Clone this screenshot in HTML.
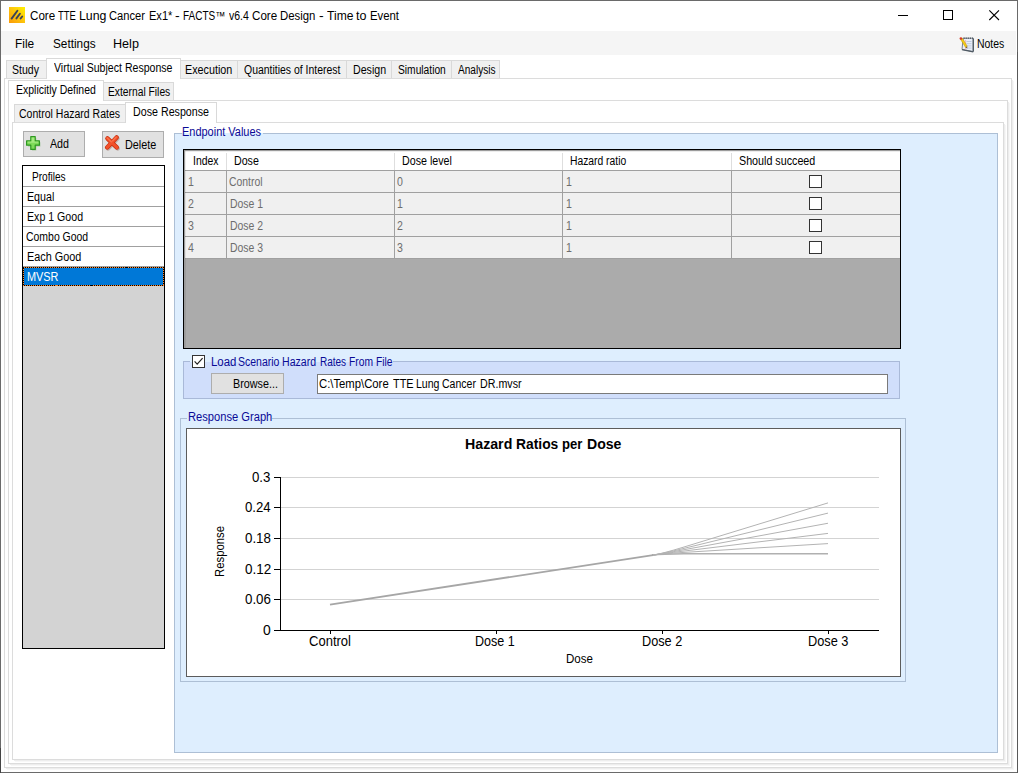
<!DOCTYPE html>
<html lang="en"><head><meta charset="utf-8"><title>Core TTE Lung Cancer Ex1* - FACTS v6.4 Core Design - Time to Event</title>
<style>
html,body{margin:0;padding:0}
body{width:1018px;height:773px;position:relative;overflow:hidden;background:#fff;font-family:"Liberation Sans",sans-serif;font-size:11px;color:#000}
div,span,svg{position:absolute;box-sizing:border-box}
.t{white-space:pre;line-height:20px;height:20px}
.frame{left:0;top:0;width:1018px;height:773px;border:1px solid #6a6a6a}
.menubar{left:1px;top:31px;width:1015px;height:24px;background:#f5f5f5}
/* tabs */
.tab{background:#f0f0f0;border:1px solid #d9d9d9;border-bottom:none}
.tab.sel{background:#fff}
.page{border:1px solid #dcdcdc;background:#fff}
.sh1{background:#ededed}.sh2{background:#f7f7f7}
.btn{background:#e1e1e1;border:1px solid #adadad}
.list{left:22px;top:165px;width:143px;height:484px;border:1px solid #000;background:#d3d3d3}
.list .row{left:0;width:141px;height:20px;background:#fff;border-bottom:1px solid #a0a0a0}
.panel{background:#deeefe}
.ln{background:#adbfd5}
.grid{left:183px;top:149px;width:718px;height:200px;border:1px solid #000;background:#ababab}
.grid .hd{left:0;top:0;width:716px;height:21px;background:#fff;border-bottom:1px solid #a0a0a0}
.grid .r{left:0;width:716px;height:22px;background:#f0f0f0;border-bottom:1px solid #a0a0a0}
.grid .v{top:21px;width:1px;height:88px;background:#a0a0a0}
.grid .hv{top:3px;width:1px;height:17px;background:#dedede}
.cb{width:13px;height:13px;border:1px solid #333;background:#fff}
.tb{left:317px;top:374px;width:571px;height:20px;border:1px solid #7a7a7a;background:#fff}
.chart{left:186px;top:428px;width:715px;height:249px;border:1px solid #5c5c5c;background:#fff}

</style></head>
<body>
<div class="frame"></div>
<div style="left:0;top:748px;width:1px;height:25px;background:#444"></div>
<div style="left:1017px;top:52px;width:1px;height:721px;background:#585858"></div>
<!-- title bar icon -->
<svg style="left:9px;top:7px" width="16" height="16" viewBox="0 0 16 16">
<defs><linearGradient id="ig" x1="0" y1="1" x2="1" y2="0"><stop offset="0" stop-color="#fb9a08"/><stop offset="0.55" stop-color="#fdc80c"/><stop offset="1" stop-color="#fff200"/></linearGradient></defs>
<rect width="16" height="16" fill="url(#ig)"/>
<g stroke="#3b4259" stroke-width="1.9" stroke-linecap="round"><path d="M2.6 11.6L8.4 3.8"/><path d="M7.4 11.4L10.9 6.7"/><path d="M11.6 11.5L13.2 9.5"/></g>
</svg>
<!-- window controls -->
<svg style="left:890px;top:5px" width="120" height="22" viewBox="0 0 120 22" shape-rendering="crispEdges">
<rect x="8" y="10" width="10" height="1" fill="#000"/>
<rect x="53.5" y="5.5" width="9" height="9" fill="none" stroke="#000" stroke-width="1"/>
<g shape-rendering="auto" stroke="#000" stroke-width="1.1"><path d="M99.3 5.3L109 15M109 5.3L99.3 15"/></g>
</svg>
<div class="menubar"></div>
<!-- notes icon -->
<svg style="left:958px;top:36px" width="18" height="18" viewBox="0 0 18 18">
<path d="M5.2 2.2L15.2 2.2L15.2 15.6L4 13.4Z" fill="#e9eef8" stroke="#6c7680" stroke-width="0.9"/>
<path d="M15.3 2.4L15.3 15.6" stroke="#4f5a64" stroke-width="1.3"/>
<path d="M4 13.6L15.2 15.8" stroke="#4f5a64" stroke-width="1.3"/>
<path d="M5.6 2.2h9.4" stroke="#555e68" stroke-width="1.6" stroke-dasharray="1.1 1"/>
<g stroke="#b9c6dc" stroke-width="0.9"><path d="M8.5 5.5h5"/><path d="M8.5 7.7h5"/><path d="M8.5 9.9h5"/><path d="M8.5 12.1h5"/></g>
<path d="M7.6 4v9.6" stroke="#f0a0a0" stroke-width="0.7"/>
<path d="M2.6 3.4L4.4 2.2L9.2 10.2L7.6 11.4Z" fill="#f6cf12" stroke="#b98d0a" stroke-width="0.5"/>
<path d="M7.6 11.4L9.2 10.2L9.3 12.6Z" fill="#6b5a3a"/>
<circle cx="2.9" cy="2.5" r="1.3" fill="#d23a28"/>
</svg>

<!-- level 1 tab page -->
<div class="page" style="left:4px;top:78px;width:1008px;height:690px"></div>
<div class="sh1" style="left:1012px;top:80px;width:1px;height:689px"></div><div class="sh2" style="left:1013px;top:81px;width:1px;height:689px"></div>
<div class="sh1" style="left:6px;top:768px;width:1007px;height:1px"></div><div class="sh2" style="left:7px;top:769px;width:1007px;height:1px"></div>
<!-- level 1 tabs -->
<div class="tab" style="left:6px;top:60px;width:494px;height:18px"></div>
<div style="left:237px;top:61px;width:1px;height:17px;background:#d9d9d9"></div>
<div style="left:346px;top:61px;width:1px;height:17px;background:#d9d9d9"></div>
<div style="left:391px;top:61px;width:1px;height:17px;background:#d9d9d9"></div>
<div style="left:451px;top:61px;width:1px;height:17px;background:#d9d9d9"></div>
<div class="tab sel" style="left:46px;top:58px;width:135px;height:21px"></div>

<!-- level 2 -->
<div class="page" style="left:8px;top:100px;width:1000px;height:664px"></div>
<div class="sh1" style="left:1008px;top:102px;width:1px;height:663px"></div><div class="sh2" style="left:1009px;top:103px;width:1px;height:663px"></div>
<div class="sh1" style="left:10px;top:764px;width:999px;height:1px"></div><div class="sh2" style="left:11px;top:765px;width:999px;height:1px"></div>
<div class="tab" style="left:103px;top:82px;width:71px;height:18px"></div>
<div class="tab sel" style="left:8px;top:80px;width:96px;height:21px"></div>

<!-- level 3 -->
<div class="page" style="left:12px;top:122px;width:992px;height:638px"></div>
<div class="sh1" style="left:1004px;top:124px;width:1px;height:637px"></div><div class="sh2" style="left:1005px;top:125px;width:1px;height:637px"></div>
<div class="sh1" style="left:14px;top:760px;width:991px;height:1px"></div><div class="sh2" style="left:15px;top:761px;width:991px;height:1px"></div>
<div class="tab" style="left:14px;top:104px;width:112px;height:18px"></div>
<div class="tab sel" style="left:125px;top:102px;width:92px;height:21px"></div>

<!-- buttons -->
<div class="btn" style="left:23px;top:131px;width:62px;height:26px"></div>
<div class="btn" style="left:102px;top:131px;width:62px;height:27px"></div>
<!-- add icon -->
<svg style="left:25px;top:135px" width="17" height="17" viewBox="0 0 17 17">
<path d="M6.3 2.2h4.2v4.1h4.1v4.2h-4.1v4.1H6.3v-4.1H2.2V6.3h4.1z" fill="#3f8f2c" opacity="0.35" transform="translate(0.8,0.9)"/>
<path d="M5.8 1.6h4.4v4.2h4.2v4.4h-4.2v4.2H5.8v-4.2H1.6V5.8h4.2z" fill="#7fdc5a" stroke="#2f9822" stroke-width="1.2" stroke-linejoin="round"/>
<path d="M6.6 2.6h2.8v4h4v1.2h-10.8v-1.2h4z" fill="#b4f090" opacity="0.7"/>
</svg>
<!-- delete icon -->
<svg style="left:104px;top:135px" width="17" height="17" viewBox="0 0 17 17">
<g fill="none" stroke-linecap="round">
<g stroke="#6a2a18" stroke-width="4.2" opacity="0.28" transform="translate(0.9,1)"><path d="M3.4 3.6L12.8 12.6"/><path d="M12.6 2.6L3.2 12.6"/></g>
<g stroke="#c9300f" stroke-width="4.4"><path d="M3.4 3.4L12.8 12.4"/><path d="M12.6 2.4L3.2 12.4"/></g>
<g stroke="#f2512b" stroke-width="3"><path d="M3.4 3.4L12.8 12.4"/><path d="M12.6 2.4L3.2 12.4"/></g>
<g stroke="#ff8259" stroke-width="1.2" opacity="0.8"><path d="M3.2 2.9L7.4 6.9"/><path d="M12.2 2.1L8.6 5.9"/></g>
</g>
</svg>

<!-- profile list -->
<div class="list">
<div class="row" style="top:0;height:21px"></div>
<div class="row" style="top:21px"></div>
<div class="row" style="top:41px"></div>
<div class="row" style="top:61px"></div>
<div class="row" style="top:81px"></div>
<div style="left:0;top:101px;width:141px;height:19px;background:#0078d7"></div>
<svg style="left:0;top:101px" width="141" height="19" shape-rendering="crispEdges"><rect x="0.5" y="0.5" width="140" height="18" fill="none" stroke="#000" stroke-width="1"/><rect x="0.5" y="0.5" width="140" height="18" fill="none" stroke="#ff8728" stroke-width="1" stroke-dasharray="1 1"/></svg>
</div>

<!-- endpoint values panel -->
<div class="panel" style="left:174px;top:133px;width:824px;height:620px"></div>
<div class="ln" style="left:174px;top:133px;width:1px;height:620px"></div>
<div class="ln" style="left:997px;top:133px;width:1px;height:620px"></div>
<div class="ln" style="left:174px;top:752px;width:824px;height:1px"></div>
<div class="ln" style="left:174px;top:133px;width:8px;height:1px"></div>
<div class="ln" style="left:263px;top:133px;width:735px;height:1px"></div>

<!-- grid -->
<div class="grid">
<div class="hd"></div>
<div class="r" style="top:21px"></div><div class="r" style="top:43px"></div><div class="r" style="top:65px"></div><div class="r" style="top:87px"></div>
<div class="v" style="left:42px"></div><div class="v" style="left:210px"></div><div class="v" style="left:378px"></div><div class="v" style="left:547px"></div>
<div class="hv" style="left:42px"></div><div class="hv" style="left:210px"></div><div class="hv" style="left:378px"></div><div class="hv" style="left:547px"></div>
<div style="left:0;top:0;width:716px;height:1px;background:#9c9c9c"></div>
<div style="left:0;top:0;width:1px;height:198px;background:#9c9c9c"></div>
<div style="left:1px;top:1px;width:715px;height:1px;background:rgba(0,0,0,0.07)"></div>
<div style="left:1px;top:1px;width:1px;height:197px;background:rgba(0,0,0,0.07)"></div>
<div class="cb" style="left:625px;top:25px"></div><div class="cb" style="left:625px;top:47px"></div><div class="cb" style="left:625px;top:69px"></div><div class="cb" style="left:625px;top:91px"></div>
</div>

<!-- load scenario group -->
<div style="left:183px;top:361px;width:717px;height:38px;background:#d0defb;border:1px solid #a9b9d8"></div>
<div style="left:190px;top:361px;width:203px;height:1px;background:#deeefe"></div>
<div class="cb" style="left:192px;top:355px"></div>
<svg style="left:192px;top:355px" width="13" height="13" viewBox="0 0 13 13"><path d="M2.6 6.4L5.2 9.2L10.6 3.2" fill="none" stroke="#222" stroke-width="1.2"/></svg>
<div class="btn" style="left:211px;top:373px;width:73px;height:21px"></div>
<div class="tb"></div>

<!-- response graph group -->
<div class="ln" style="left:180px;top:418px;width:1px;height:264px"></div>
<div class="ln" style="left:905px;top:418px;width:1px;height:264px"></div>
<div class="ln" style="left:180px;top:681px;width:726px;height:1px"></div>
<div class="ln" style="left:180px;top:418px;width:7px;height:1px"></div>
<div class="ln" style="left:272px;top:418px;width:634px;height:1px"></div>
<div class="chart"></div>
<svg style="left:187px;top:429px" width="713" height="247" viewBox="187 429 713 247">
<g shape-rendering="crispEdges" stroke="#d3d3d3" stroke-width="1">
<path d="M281 477.5H879M281 507.5H879M281 538.5H879M281 569.5H879M281 599.5H879"/>
</g>
<g fill="none" stroke="#b3b3b3" stroke-width="1">
<path d="M652 555.28Q662 553.75 684 547.01L828 502.9"/>
<path d="M652 555.28Q662 553.75 684 548.36L828 513.1"/>
<path d="M652 555.28Q662 553.75 684 549.71L828 523.25"/>
<path d="M652 555.28Q662 553.75 684 551.05L828 533.4"/>
<path d="M652 555.28Q662 553.75 684 552.40L828 543.6"/>
<path d="M652 555.28Q662 553.75 684 553.75L828 553.75" stroke="#b0b0b0" stroke-width="1.7"/>
</g>
<path d="M330 604.6L653 555.13" fill="none" stroke="#a6a6a6" stroke-width="1.9"/>
<g shape-rendering="crispEdges" stroke="#000" stroke-width="1">
<path d="M280.5 477V631M274 630.5H879"/>
<path d="M274 477.5H280M274 507.5H280M274 538.5H280M274 569.5H280M274 599.5H280"/>
<path d="M330.5 630V634M496.5 630V634M662.5 630V634M828.5 630V634"/>
</g>
</svg>


<!-- text labels -->
<span class="t" style="top:6.00px;font-size:12px;left:30.12px;transform:scaleX(0.9680);transform-origin:0 0;">Core</span>
<span class="t" style="top:6.00px;font-size:12px;left:58.00px;transform:scaleX(0.7864);transform-origin:0 0;">TTE</span>
<span class="t" style="top:6.00px;font-size:12px;left:78.77px;transform:scaleX(1.0280);transform-origin:0 0;">Lung</span>
<span class="t" style="top:6.00px;font-size:12px;left:109.24px;transform:scaleX(0.9289);transform-origin:0 0;">Cancer</span>
<span class="t" style="top:6.00px;font-size:12px;left:148.88px;transform:scaleX(0.9196);transform-origin:0 0;">Ex1*</span>
<span class="t" style="top:6.00px;font-size:12px;left:175.22px;transform:scaleX(1.1667);transform-origin:0 0;">-</span>
<span class="t" style="top:6.00px;font-size:12px;left:183.07px;transform:scaleX(0.8330);transform-origin:0 0;">FACTS™</span>
<span class="t" style="top:6.00px;font-size:12px;left:228.80px;transform:scaleX(0.8756);transform-origin:0 0;">v6.4</span>
<span class="t" style="top:6.00px;font-size:12px;left:252.22px;transform:scaleX(0.9680);transform-origin:0 0;">Core</span>
<span class="t" style="top:6.00px;font-size:12px;left:280.15px;transform:scaleX(0.9483);transform-origin:0 0;">Design</span>
<span class="t" style="top:6.00px;font-size:12px;left:318.92px;transform:scaleX(1.1667);transform-origin:0 0;">-</span>
<span class="t" style="top:6.00px;font-size:12px;left:327.05px;transform:scaleX(1.0078);transform-origin:0 0;">Time</span>
<span class="t" style="top:6.00px;font-size:12px;left:356.30px;transform:scaleX(1.0421);transform-origin:0 0;">to</span>
<span class="t" style="top:6.00px;font-size:12px;left:369.76px;transform:scaleX(0.9445);transform-origin:0 0;">Event</span>
<span class="t" style="top:33.50px;font-size:12px;left:15.41px;transform:scaleX(0.9889);transform-origin:0 0;">File</span>
<span class="t" style="top:33.50px;font-size:12px;left:52.61px;transform:scaleX(0.9835);transform-origin:0 0;">Settings</span>
<span class="t" style="top:33.50px;font-size:12px;left:113.15px;transform:scaleX(1.0495);transform-origin:0 0;">Help</span>
<span class="t" style="top:33.50px;font-size:12px;left:977.03px;transform:scaleX(0.8700);transform-origin:0 0;">Notes</span>
<span class="t" style="top:60.00px;font-size:12px;left:11.66px;transform:scaleX(0.8793);transform-origin:0 0;">Study</span>
<span class="t" style="top:58.00px;font-size:12px;left:54.00px;transform:scaleX(0.8806);transform-origin:0 0;">Virtual Subject Response</span>
<span class="t" style="top:60.00px;font-size:12px;left:184.60px;transform:scaleX(0.8980);transform-origin:0 0;">Execution</span>
<span class="t" style="top:60.00px;font-size:12px;left:243.56px;transform:scaleX(0.8707);transform-origin:0 0;">Quantities of Interest</span>
<span class="t" style="top:60.00px;font-size:12px;left:352.51px;transform:scaleX(0.8867);transform-origin:0 0;">Design</span>
<span class="t" style="top:60.00px;font-size:12px;left:398.07px;transform:scaleX(0.8530);transform-origin:0 0;">Simulation</span>
<span class="t" style="top:60.00px;font-size:12px;left:458.10px;transform:scaleX(0.8407);transform-origin:0 0;">Analysis</span>
<span class="t" style="top:80.00px;font-size:12px;left:15.83px;transform:scaleX(0.8735);transform-origin:0 0;">Explicitly Defined</span>
<span class="t" style="top:82.00px;font-size:12px;left:107.54px;transform:scaleX(0.8561);transform-origin:0 0;">External Files</span>
<span class="t" style="top:104.00px;font-size:12px;left:19.36px;transform:scaleX(0.8760);transform-origin:0 0;">Control Hazard Rates</span>
<span class="t" style="top:102.00px;font-size:12px;left:132.61px;transform:scaleX(0.8905);transform-origin:0 0;">Dose Response</span>
<span class="t" style="top:134.00px;font-size:12px;left:49.80px;transform:scaleX(0.8867);transform-origin:0 0;">Add</span>
<span class="t" style="top:135.00px;font-size:12px;left:125.40px;transform:scaleX(0.9023);transform-origin:0 0;">Delete</span>
<span class="t" style="top:167.00px;font-size:12px;left:31.76px;transform:scaleX(0.8413);transform-origin:0 0;">Profiles</span>
<span class="t" style="top:187.00px;font-size:12px;left:26.51px;transform:scaleX(0.8897);transform-origin:0 0;">Equal</span>
<span class="t" style="top:207.00px;font-size:12px;left:26.52px;transform:scaleX(0.8842);transform-origin:0 0;">Exp 1 Good</span>
<span class="t" style="top:227.00px;font-size:12px;left:26.36px;transform:scaleX(0.8712);transform-origin:0 0;">Combo Good</span>
<span class="t" style="top:247.00px;font-size:12px;left:26.50px;transform:scaleX(0.9047);transform-origin:0 0;">Each Good</span>
<span class="t" style="top:267.00px;font-size:12px;color:#fff;left:26.69px;transform:scaleX(0.9083);transform-origin:0 0;">MVSR</span>
<span class="t" style="top:122.00px;font-size:12px;color:#0a0a96;left:182.19px;transform:scaleX(0.9138);transform-origin:0 0;">Endpoint Values</span>
<span class="t" style="top:352.00px;font-size:12px;color:#0a0a96;left:210.95px;transform:scaleX(0.9520);transform-origin:0 0;">Load</span>
<span class="t" style="top:352.00px;font-size:12px;color:#0a0a96;left:238.46px;transform:scaleX(0.8731);transform-origin:0 0;">Scenario</span>
<span class="t" style="top:352.00px;font-size:12px;color:#0a0a96;left:282.42px;transform:scaleX(0.8811);transform-origin:0 0;">Hazard</span>
<span class="t" style="top:352.00px;font-size:12px;color:#0a0a96;left:319.57px;transform:scaleX(0.8333);transform-origin:0 0;">Rates</span>
<span class="t" style="top:352.00px;font-size:12px;color:#0a0a96;left:349.14px;transform:scaleX(0.8571);transform-origin:0 0;">From</span>
<span class="t" style="top:352.00px;font-size:12px;color:#0a0a96;left:375.94px;transform:scaleX(0.8556);transform-origin:0 0;">File</span>
<span class="t" style="top:407.00px;font-size:12px;color:#0a0a96;left:187.87px;transform:scaleX(0.9292);transform-origin:0 0;">Response Graph</span>
<span class="t" style="top:151.00px;font-size:12px;left:192.63px;transform:scaleX(0.8673);transform-origin:0 0;">Index</span>
<span class="t" style="top:151.00px;font-size:12px;left:233.61px;transform:scaleX(0.8868);transform-origin:0 0;">Dose</span>
<span class="t" style="top:151.00px;font-size:12px;left:401.61px;transform:scaleX(0.8894);transform-origin:0 0;">Dose level</span>
<span class="t" style="top:151.00px;font-size:12px;left:569.64px;transform:scaleX(0.8594);transform-origin:0 0;">Hazard ratio</span>
<span class="t" style="top:151.00px;font-size:12px;left:738.80px;transform:scaleX(0.8932);transform-origin:0 0;">Should succeed</span>
<span class="t" style="top:172.00px;font-size:12px;color:#6d6d6d;left:188.3px;transform:scaleX(0.88);transform-origin:0 0;">1</span>
<span class="t" style="top:172.00px;font-size:12px;color:#6d6d6d;left:229.07px;transform:scaleX(0.8667);transform-origin:0 0;">Control</span>
<span class="t" style="top:172.00px;font-size:12px;color:#6d6d6d;left:397.3px;transform:scaleX(0.88);transform-origin:0 0;">0</span>
<span class="t" style="top:172.00px;font-size:12px;color:#6d6d6d;left:565.8px;transform:scaleX(0.88);transform-origin:0 0;">1</span>
<span class="t" style="top:194.00px;font-size:12px;color:#6d6d6d;left:188.3px;transform:scaleX(0.88);transform-origin:0 0;">2</span>
<span class="t" style="top:194.00px;font-size:12px;color:#6d6d6d;left:229.88px;transform:scaleX(0.8699);transform-origin:0 0;">Dose 1</span>
<span class="t" style="top:194.00px;font-size:12px;color:#6d6d6d;left:397.3px;transform:scaleX(0.88);transform-origin:0 0;">1</span>
<span class="t" style="top:194.00px;font-size:12px;color:#6d6d6d;left:565.8px;transform:scaleX(0.88);transform-origin:0 0;">1</span>
<span class="t" style="top:216.00px;font-size:12px;color:#6d6d6d;left:188.3px;transform:scaleX(0.88);transform-origin:0 0;">3</span>
<span class="t" style="top:216.00px;font-size:12px;color:#6d6d6d;left:229.88px;transform:scaleX(0.8699);transform-origin:0 0;">Dose 2</span>
<span class="t" style="top:216.00px;font-size:12px;color:#6d6d6d;left:397.3px;transform:scaleX(0.88);transform-origin:0 0;">2</span>
<span class="t" style="top:216.00px;font-size:12px;color:#6d6d6d;left:565.8px;transform:scaleX(0.88);transform-origin:0 0;">1</span>
<span class="t" style="top:238.00px;font-size:12px;color:#6d6d6d;left:188.3px;transform:scaleX(0.88);transform-origin:0 0;">4</span>
<span class="t" style="top:238.00px;font-size:12px;color:#6d6d6d;left:229.88px;transform:scaleX(0.8699);transform-origin:0 0;">Dose 3</span>
<span class="t" style="top:238.00px;font-size:12px;color:#6d6d6d;left:397.3px;transform:scaleX(0.88);transform-origin:0 0;">3</span>
<span class="t" style="top:238.00px;font-size:12px;color:#6d6d6d;left:565.8px;transform:scaleX(0.88);transform-origin:0 0;">1</span>
<span class="t" style="top:374.00px;font-size:12px;left:232.50px;transform:scaleX(0.8979);transform-origin:0 0;">Browse...</span>
<span class="t" style="top:374.00px;font-size:12px;left:319.13px;transform:scaleX(0.9411);transform-origin:0 0;">C:\Temp\Core</span>
<span class="t" style="top:374.00px;font-size:12px;left:392.57px;transform:scaleX(0.9091);transform-origin:0 0;">TTE</span>
<span class="t" style="top:374.00px;font-size:12px;left:415.72px;transform:scaleX(0.8800);transform-origin:0 0;">Lung</span>
<span class="t" style="top:374.00px;font-size:12px;left:442.46px;transform:scaleX(0.8763);transform-origin:0 0;">Cancer</span>
<span class="t" style="top:374.00px;font-size:12px;left:479.61px;transform:scaleX(0.8901);transform-origin:0 0;">DR.mvsr</span>
<span class="t" style="top:434.00px;font-size:14px;font-weight:700;left:464.84px;transform:scaleX(1.0133);transform-origin:0 0;">Hazard</span>
<span class="t" style="top:434.00px;font-size:14px;font-weight:700;left:515.76px;transform:scaleX(0.9880);transform-origin:0 0;">Ratios</span>
<span class="t" style="top:434.00px;font-size:14px;font-weight:700;left:562.20px;transform:scaleX(0.9349);transform-origin:0 0;">per</span>
<span class="t" style="top:434.00px;font-size:14px;font-weight:700;left:587.25px;transform:scaleX(1.0061);transform-origin:0 0;">Dose</span>
<span class="t" style="top:467.00px;font-size:14px;left:252.03px;transform:scaleX(0.9459);transform-origin:0 0;">0.3</span>
<span class="t" style="top:497.00px;font-size:14px;left:244.53px;transform:scaleX(0.9434);transform-origin:0 0;">0.24</span>
<span class="t" style="top:528.00px;font-size:14px;left:244.52px;transform:scaleX(0.9524);transform-origin:0 0;">0.18</span>
<span class="t" style="top:558.50px;font-size:14px;left:244.52px;transform:scaleX(0.9615);transform-origin:0 0;">0.12</span>
<span class="t" style="top:589.00px;font-size:14px;left:244.52px;transform:scaleX(0.9524);transform-origin:0 0;">0.06</span>
<span class="t" style="top:619.50px;font-size:14px;left:262.80px;transform:scaleX(0.9926);transform-origin:0 0;">0</span>
<span class="t" style="top:631.00px;font-size:14px;left:308.80px;transform:scaleX(0.9310);transform-origin:0 0;">Control</span>
<span class="t" style="top:631.00px;font-size:14px;left:474.90px;transform:scaleX(0.8959);transform-origin:0 0;">Dose 1</span>
<span class="t" style="top:631.00px;font-size:14px;left:641.69px;transform:scaleX(0.9076);transform-origin:0 0;">Dose 2</span>
<span class="t" style="top:631.00px;font-size:14px;left:807.69px;transform:scaleX(0.9123);transform-origin:0 0;">Dose 3</span>
<span class="t" style="top:649.00px;font-size:12px;left:565.74px;transform:scaleX(0.9623);transform-origin:0 0;">Dose</span>
<span class="t" style="left:219.8px;top:577.2px;font-size:12px;line-height:0;height:0;transform:rotate(-90deg) scaleX(0.945);transform-origin:0 0;">Response</span>
</body></html>
